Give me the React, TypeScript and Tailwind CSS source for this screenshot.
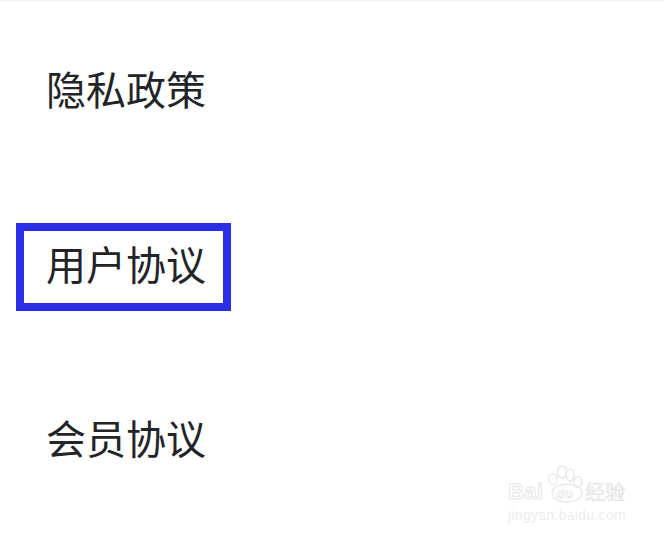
export default function App() {
  const font = "font-['Noto_Sans_CJK_SC','Noto_Sans_CJK_JP',sans-serif]";
  const latin = "font-['Liberation_Sans',sans-serif]";
  return (
    <div className={`relative w-[664px] h-[536px] overflow-hidden bg-white border-t border-[#f3f3f3] ${font}`}>
      <div className="flex flex-col items-start pl-[16px] pt-[45px] text-[40px] text-[#222428]">
        <div className="flex items-center h-[88px] w-[215px] pl-[30px] pb-[4px]">隐私政策</div>
        <div className="flex items-center mt-[89px] h-[88px] w-[215px] pl-[22px] pb-[8px] border-[8px] border-[#2a2ee6]">用户协议</div>
        <div className="flex items-center mt-[85px] h-[88px] w-[215px] pl-[30px] pb-[6px]">会员协议</div>
      </div>
      <div className="absolute left-[508px] top-[463px] flex flex-col w-[122px]">
        <div className="flex items-end h-[40px]">
          <div className={`w-[36px] text-[22px] leading-[24px] font-bold tracking-[0.3px] text-transparent [-webkit-text-stroke:1px_#e6e6e6] ${latin}`}>Bai</div>
          <div className="relative flex items-end justify-center w-[41px] h-[40px] pb-[1px]">
            <svg className="absolute inset-0" width="41" height="40" viewBox="0 0 41 40" fill="none" stroke="#e8e8e8" strokeWidth="1.4">
              <ellipse cx="9" cy="15" rx="4" ry="5.5" />
              <ellipse cx="18" cy="8" rx="4.5" ry="6" />
              <ellipse cx="26" cy="11" rx="4" ry="6" />
              <ellipse cx="34" cy="18" rx="4" ry="5.5" />
              <ellipse cx="23" cy="29" rx="15" ry="9" />
            </svg>
            <div className={`relative text-[13px] leading-[18px] font-bold text-transparent [-webkit-text-stroke:0.6px_#e2e2e2] ${latin}`}>du</div>
          </div>
          <div className="text-[20px] leading-[24px] whitespace-nowrap text-transparent [-webkit-text-stroke:0.7px_#e0e0e0]">经验</div>
        </div>
        <div className={`mt-[3px] text-[14px] leading-[16px] tracking-[0.3px] whitespace-nowrap text-[#ededed] ${latin}`}>jingyan.baidu.com</div>
      </div>
    </div>
  );
}
